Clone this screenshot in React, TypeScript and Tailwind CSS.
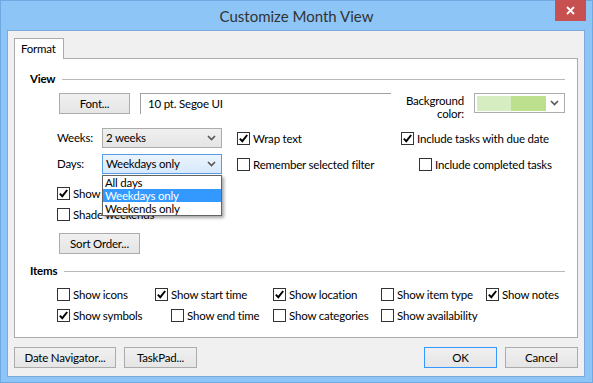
import React from 'react';

const font = "font-['Lato',sans-serif]";

function Chevron() {
  return (
    <svg width="9" height="6" viewBox="0 0 9 6" className="shrink-0">
      <path d="M1 1 L4.5 4.5 L8 1" stroke="#555" strokeWidth="1.6" fill="none" />
    </svg>
  );
}

function Box({ checked }: { checked?: boolean }) {
  return (
    <span className="w-[13px] h-[13px] border border-[#333] bg-white flex items-center justify-center shrink-0">
      {checked && (
        <svg width="9" height="9" viewBox="0 0 9 9">
          <path d="M0.8 4.6 L3.3 7.2 L8.2 1" stroke="#000" strokeWidth="1.9" fill="none" />
        </svg>
      )}
    </span>
  );
}

function Check({ label, checked }: { label: string; checked?: boolean }) {
  return (
    <div className="flex items-center gap-[3px] h-[13px] whitespace-nowrap">
      <Box checked={checked} />
      <span className="leading-[13px]">{label}</span>
    </div>
  );
}

function Button({ label, w, primary }: { label: string; w: string; primary?: boolean }) {
  return (
    <div
      className={`${w} h-[21px] flex items-center justify-center border bg-gradient-to-b from-[#f0f0f0] to-[#e5e5e5] ${
        primary ? 'border-[#3399ff]' : 'border-[#acacac]'
      }`}
    >
      {label}
    </div>
  );
}

function Header({ title }: { title: string }) {
  return (
    <div className="h-[16px] flex items-center pl-[15px] pr-[12px]">
      <span className="font-bold">{title}</span>
      <div className="flex-1 h-px bg-[#b9b9b9] ml-[7px]" />
    </div>
  );
}

export default function App() {
  return (
    <div className={`w-[593px] h-[383px] bg-[#8cc5f6] border border-[#6ea9e2] flex flex-col text-[11.5px] tracking-[-0.2px] text-black ${font}`}>
      <div className="h-[29px] relative flex items-center justify-center">
        <span className="text-[15px] tracking-normal text-[#333] mt-[1px]">Customize Month View</span>
        <div className="absolute right-[6px] top-[-1px] w-[31px] h-[21px] bg-[#c75050] flex items-center justify-center">
          <svg width="9" height="9" viewBox="0 0 9 9">
            <path d="M1 1 L8 8 M8 1 L1 8" stroke="#fff" strokeWidth="1.8" />
          </svg>
        </div>
      </div>

      <div className="flex-1 ml-[6px] mr-[7px] mb-[5px] border border-[#7eaadb] bg-[#f0f0f0] pt-[7px] pl-[6px] pr-[6px] flex flex-col">
        <div className="w-[50px] h-[21px] border border-b-0 border-[#acacac] bg-white relative z-10 -mb-px flex items-center pl-[6px]">
          Format
        </div>
        <div className="h-[280px] border border-[#acacac] bg-white flex flex-col">
          <div className="mt-[12px]">
            <Header title="View" />
          </div>

          <div className="mt-[6px] h-[21px] flex items-start pl-[44px] pr-[12px]">
            <Button label="Font..." w="w-[71px]" />
            <div className="ml-[10px] w-[251px] h-[21px] border-l border-t border-[#a0a0a0] pl-[7px] flex items-center">
              10 pt. Segoe UI
            </div>
            <div className="flex-1 text-right pr-[10px] leading-[13px] pt-[1px]">
              Background
              <br />
              color:
            </div>
            <div className="w-[91px] h-[20px] border border-[#acacac] bg-white flex items-center pl-[2px] pr-[5px]">
              <div className="w-[34px] h-[15px] bg-[#d6ecc1]" />
              <div className="w-[35px] h-[15px] bg-[#bde08f]" />
              <div className="flex-1" />
              <Chevron />
            </div>
          </div>

          <div className="mt-[14px] h-[20px] flex items-center pl-[42px]">
            <span className="w-[45px]">Weeks:</span>
            <div className="w-[120px] h-[20px] border border-[#acacac] bg-gradient-to-b from-[#f0f0f0] to-[#e5e5e5] flex items-center justify-between pl-[3px] pr-[5px]">
              <span>2 weeks</span>
              <Chevron />
            </div>
            <div className="ml-[15px] w-[164px]">
              <Check label="Wrap text" checked />
            </div>
            <Check label="Include tasks with due date" checked />
          </div>

          <div className="mt-[6px] h-[20px] flex items-center pl-[42px] relative z-20">
            <span className="w-[45px]">Days:</span>
            <div className="w-[120px] h-[20px] relative">
              <div className="w-full h-full border border-[#569de5] bg-gradient-to-b from-[#ecf4fc] to-[#d6e9fc] flex items-center justify-between pl-[3px] pr-[5px]">
                <span>Weekdays only</span>
                <Chevron />
              </div>
              <div className="absolute left-0 top-[21px] w-[120px] border border-[#646464] bg-white shadow-[2px_2px_3px_rgba(0,0,0,0.35)] leading-[13px]">
                <div className="h-[13px] pl-[2px]">All days</div>
                <div className="h-[13px] pl-[2px] bg-[#3399ff] text-white">Weekdays only</div>
                <div className="h-[13px] pl-[2px]">Weekends only</div>
              </div>
            </div>
            <div className="ml-[15px] w-[182px]">
              <Check label="Remember selected filter" />
            </div>
            <Check label="Include completed tasks" />
          </div>

          <div className="mt-[13px] pl-[42px]">
            <Check label="Show week numbers" checked />
          </div>
          <div className="mt-[8px] pl-[42px]">
            <Check label="Shade weekends" />
          </div>

          <div className="mt-[12px] pl-[44px]">
            <Button label="Sort Order..." w="w-[81px]" />
          </div>

          <div className="mt-[9px]">
            <Header title="Items" />
          </div>

          <div className="mt-[9px] pl-[42px] grid grid-cols-[98px_118px_108px_105px_1fr]">
            <Check label="Show icons" />
            <Check label="Show start time" checked />
            <Check label="Show location" checked />
            <Check label="Show item type" />
            <Check label="Show notes" checked />
          </div>
          <div className="mt-[8px] pl-[42px] grid grid-cols-[98px_118px_108px_105px_1fr]">
            <Check label="Show symbols" checked />
            <div className="pl-[16px]">
              <Check label="Show end time" />
            </div>
            <Check label="Show categories" />
            <Check label="Show availability" />
          </div>
        </div>

        <div className="mt-[9px] flex items-center">
          <Button label="Date Navigator..." w="w-[102px]" />
          <div className="ml-[8px]">
            <Button label="TaskPad..." w="w-[73px]" />
          </div>
          <div className="flex-1" />
          <Button label="OK" w="w-[73px]" primary />
          <div className="ml-[8px]">
            <Button label="Cancel" w="w-[73px]" />
          </div>
        </div>
      </div>
    </div>
  );
}
